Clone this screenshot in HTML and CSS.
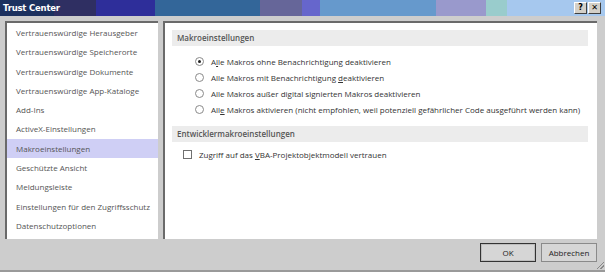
FILE: index.html
```html
<!DOCTYPE html>
<html lang="de">
<head>
    <meta charset="UTF-8">
    <title>Trust Center</title>
    <link rel="stylesheet" href="styles.css">
</head>
<body>
<div class="window">
    <div class="titlebar">
        <span class="title">Trust Center</span>
        <div class="title-buttons">
            <span class="tbtn">?</span>
            <span class="tbtn">&#x2715;</span>
        </div>
    </div>

    <div class="content">
        <ul class="nav">
            <li>Vertrauenswürdige Herausgeber</li>
            <li>Vertrauenswürdige Speicherorte</li>
            <li>Vertrauenswürdige Dokumente</li>
            <li>Vertrauenswürdige App-Kataloge</li>
            <li>Add-Ins</li>
            <li>ActiveX-Einstellungen</li>
            <li class="active">Makroeinstellungen</li>
            <li>Geschützte Ansicht</li>
            <li>Meldungsleiste</li>
            <li>Einstellungen für den Zugriffsschutz</li>
            <li>Datenschutzoptionen</li>
        </ul>

        <div class="main">
            <div class="section-head">Makroeinstellungen</div>
            <div class="options">
                <label class="opt"><span class="radio checked"></span><span>A<u>l</u>le Makros ohne Benachrichtigung deaktivieren</span></label>
                <label class="opt"><span class="radio"></span><span>Alle Makros mit Benachrichtigung <u>d</u>eaktivieren</span></label>
                <label class="opt"><span class="radio"></span><span>Alle Makros außer digital signierten Makros deaktivieren</span></label>
                <label class="opt"><span class="radio"></span><span>All<u>e</u> Makros aktivieren (nicht empfohlen, weil potenziell gefährlicher Code ausgeführt werden kann)</span></label>
            </div>
            <div class="section-head">Entwicklermakroeinstellungen</div>
            <label class="check-row"><span class="checkbox"></span><span>Zugriff auf das <u>V</u>BA-Projektobjektmodell vertrauen</span></label>
        </div>
    </div>

    <div class="footer">
        <button class="btn btn-default">OK</button>
        <button class="btn">Abbrechen</button>
        <span class="grip"></span>
    </div>
</div>
</body>
</html>
```

FILE: styles.css
```css
body {
    margin: 0;
    font-family: 'Open Sans', 'Noto Sans', sans-serif;
    font-size: 8px;
    color: #333;
    background: #cdcdcd;
}

.window {
    width: 605px;
    height: 272px;
    display: flex;
    flex-direction: column;
    background: #cdcdcd;
    border-bottom: 2px solid #9a9a9a;
    box-sizing: border-box;
}

.titlebar {
    height: 16px;
    display: flex;
    align-items: center;
    justify-content: space-between;
    padding: 0 4px 0 3px;
    background: linear-gradient(to right,
        #1c315f 0, #1c315f 54px,
        #2f2f62 54px, #2f2f62 96px,
        #2e2e9a 96px, #2e2e9a 155px,
        #336699 155px, #336699 260px,
        #666699 260px, #666699 302px,
        #6666cc 302px, #6666cc 320px,
        #6699cc 320px, #6699cc 436px,
        #9999cc 436px, #9999cc 486px,
        #99cccc 486px, #99cccc 507px,
        #a6c8ee 507px);
}

.title {
    color: #fff;
    font-family: 'DejaVu Sans', sans-serif;
    font-weight: bold;
    font-size: 8.5px;
    letter-spacing: -0.2px;
}

.title-buttons {
    display: flex;
    gap: 1px;
}

.tbtn {
    width: 11px;
    height: 10px;
    background: #d4d0c8;
    border: 1px solid;
    border-color: #fff #404040 #404040 #fff;
    font-family: 'DejaVu Sans', sans-serif;
    font-weight: bold;
    font-size: 8px;
    line-height: 10px;
    text-align: center;
    color: #000;
}

.content {
    display: flex;
    gap: 5px;
    padding: 5px 8px 0 5px;
    height: 218px;
}

.nav {
    list-style: none;
    margin: 0;
    padding: 0;
    width: 151px;
    background: #fff;
    border-top: 2px solid #6a6a6a;
    border-left: 2px solid #6a6a6a;
    color: #555;
}

.nav li {
    height: 19.3px;
    line-height: 19.3px;
    padding-left: 9px;
    white-space: nowrap;
}

.nav li.active {
    background: #cfcff5;
}

.main {
    flex: 1;
    background: #fff;
    border-top: 2px solid #6a6a6a;
    border-left: 2px solid #6a6a6a;
    padding: 7px 9px 0 7px;
}

.section-head {
    background: #ececec;
    color: #555;
    font-weight: 600;
    height: 16px;
    line-height: 16px;
    padding-left: 5px;
}

.options {
    display: flex;
    flex-direction: column;
    padding: 7px 0 9px 23px;
}

.opt {
    display: flex;
    align-items: center;
    height: 16px;
}

.radio {
    width: 7px;
    height: 7px;
    border: 1px solid #8a8a8a;
    border-radius: 50%;
    margin-right: 7px;
    position: relative;
}

.radio.checked::after {
    content: "";
    position: absolute;
    left: 2px;
    top: 2px;
    width: 3px;
    height: 3px;
    border-radius: 50%;
    background: #222;
}

.check-row {
    display: flex;
    align-items: center;
    height: 16px;
    margin-top: 4px;
    padding-left: 11px;
}

.checkbox {
    width: 7px;
    height: 7px;
    border: 1px solid #707070;
    margin-right: 7px;
}

.footer {
    flex: 1;
    display: flex;
    justify-content: flex-end;
    align-items: center;
    gap: 5px;
    padding: 0 8px 4px 0;
    position: relative;
}

.btn {
    width: 56px;
    height: 19px;
    font-family: inherit;
    font-size: 8px;
    color: #222;
    background: #d6d6d6;
    border: 1px solid #8a8a8a;
    padding: 0;
}

.btn-default {
    border: 1px solid #333;
    box-shadow: inset 0 0 0 1px #bdbdbd;
}

.grip {
    position: absolute;
    right: 1px;
    bottom: 1px;
    width: 7px;
    height: 7px;
    background: linear-gradient(135deg, transparent 45%, #888 45%, #888 55%, transparent 55%, transparent 70%, #888 70%, #888 80%, transparent 80%);
}
```
